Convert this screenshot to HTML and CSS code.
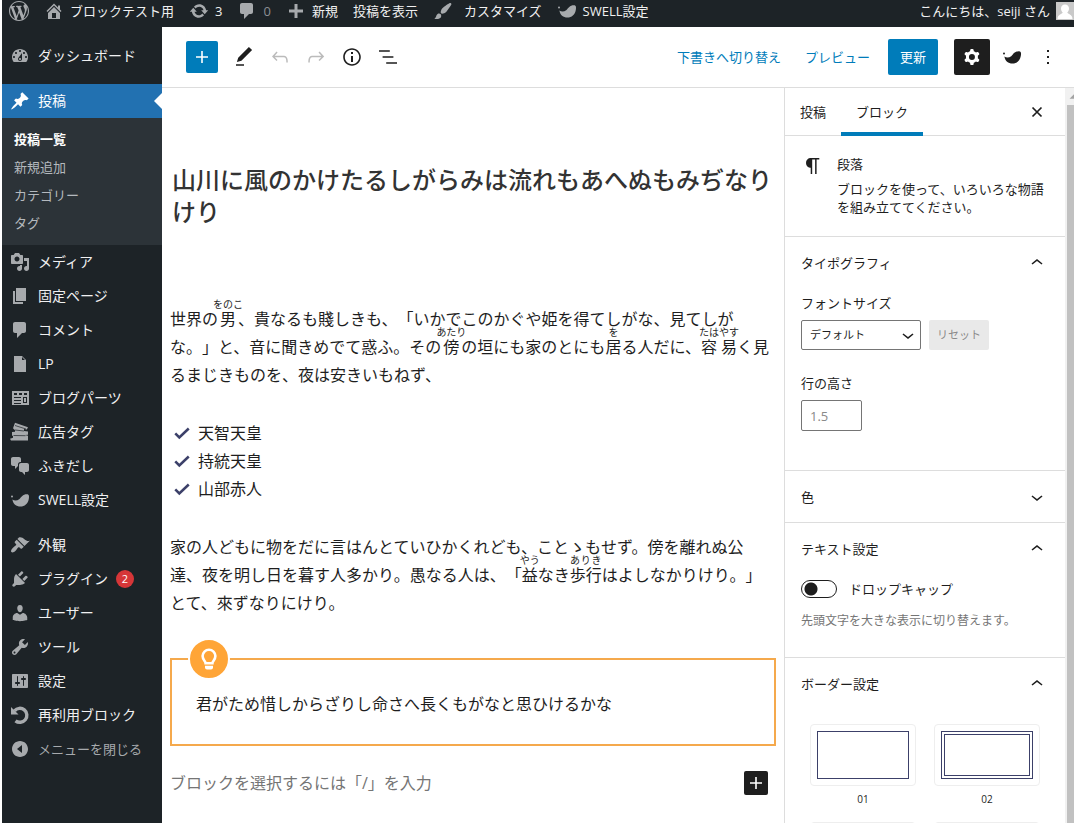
FILE: index.html
```html
<!DOCTYPE html>
<html lang="ja">
<head>
<meta charset="utf-8">
<title>投稿の編集</title>
<link rel="stylesheet" href="styles.css">
</head>
<body>
<svg class="sprite" aria-hidden="true">
  <symbol id="swell" viewBox="0 0 20 20"><circle cx="2" cy="6.500" r="1"/><path d="M2.400 9.600C4.500 11 7 11 9.200 9.200 11.500 7 12.500 4.200 17 4.200 19.200 4.200 19.300 6.500 18.800 9 18 13.800 14.500 16.600 10.500 16.600 6.200 16.600 3 14 2.400 9.600z"/></symbol>
  <symbol id="comment" viewBox="0 0 20 20"><path d="M5 2h9c1.1 0 2 .9 2 2v7c0 1.100-.9 2-2 2h-2l-5 5v-5H5c-1.100 0-2-.9-2-2V4c0-1.100.9-2 2-2z"/></symbol>
  <symbol id="add" viewBox="0 0 24 24"><path d="M18 11.200h-5.200V6h-1.600v5.200H6v1.600h5.200V18h1.600v-5.200H18z"/></symbol>
  <symbol id="up" viewBox="0 0 24 24"><path d="M6.500 12.400L12 8l5.500 4.400-.9 1.200L12 10l-4.500 3.600-1-1.200z"/></symbol>
  <symbol id="down" viewBox="0 0 24 24"><path d="M17.500 11.600L12 16l-5.500-4.400.9-1.200L12 14l4.500-3.600 1 1.200z"/></symbol>
  <symbol id="check" viewBox="0 0 20 20"><path d="M2.500 10.500l4.500 4.500L17.500 5" fill="none" stroke="currentColor" stroke-width="2.800"/></symbol>
</svg>

<header class="adminbar">
  <a href="#" aria-label="WordPress について"><svg class="dash" viewBox="0 0 20 20"><path d="M20 10c0-5.510-4.490-10-10-10C4.480 0 0 4.490 0 10c0 5.520 4.480 10 10 10 5.510 0 10-4.480 10-10zM7.780 15.370L4.370 6.220c.55-.02 1.170-.08 1.170-.08.5-.06.44-1.130-.06-1.110 0 0-1.450.11-2.370.11-.18 0-.37 0-.58-.01C4.120 2.690 6.870 1.110 10 1.110c2.330 0 4.450.87 6.050 2.340-.68-.11-1.650.39-1.650 1.580 0 .74.45 1.360.9 2.100.35.61.55 1.360.55 2.460 0 1.490-1.400 5-1.400 5l-3.030-8.370c.54-.02.82-.17.82-.17.5-.05.44-1.250-.06-1.220 0 0-1.440.12-2.380.12-.87 0-2.330-.12-2.330-.12-.5-.03-.56 1.200-.06 1.220l.92.08 1.260 3.410zM17.410 10c.24-.64.74-1.870.43-4.250.7 1.290 1.050 2.710 1.050 4.250 0 3.290-1.730 6.240-4.400 7.780.97-2.590 1.940-5.200 2.920-7.780zM6.100 18.090C3.120 16.650 1.110 13.530 1.110 10c0-1.300.23-2.480.72-3.590C3.250 10.300 4.670 14.200 6.100 18.090zm4.030-6.630l2.580 6.980c-.86.29-1.760.45-2.710.45-.79 0-1.570-.11-2.290-.33.81-2.380 1.620-4.740 2.420-7.100z"/></svg></a>
  <a href="#"><svg class="dash" viewBox="0 0 20 20"><path d="M16 8.500l1.530 1.530-1.060 1.060L10 4.600l-6.470 6.490-1.060-1.060L10 2.500l4 4v-2h2v4zm-6-2.460l6 5.990V18H4v-5.970zM12 17v-5H8v5h4z"/></svg>ブロックテスト用</a>
  <a href="#"><svg class="dash" viewBox="0 0 20 20"><path d="M10.200 3.280c3.530 0 6.430 2.610 6.920 6h2.080l-3.500 4-3.500-4h2.320c-.45-1.970-2.210-3.450-4.320-3.450-1.450 0-2.730.71-3.540 1.780L4.950 5.660C6.230 4.200 8.110 3.280 10.200 3.280zm-.4 13.440c-3.520 0-6.430-2.610-6.920-6H.8l3.500-4c1.170 1.330 2.330 2.670 3.500 4H5.480c.45 1.970 2.210 3.450 4.320 3.450 1.450 0 2.730-.71 3.540-1.780l1.710 1.950c-1.280 1.460-3.150 2.380-5.250 2.380z"/></svg>3</a>
  <a href="#" class="muted"><svg class="dash"><use href="#comment"/></svg>0</a>
  <a href="#"><svg class="dash" viewBox="0 0 20 20"><path d="M17 8.500v3h-5.500V17h-3v-5.500H3v-3h5.500V3h3v5.500z"/></svg>新規</a>
  <a href="#">投稿を表示</a>
  <a href="#" class="wide"><svg class="dash" viewBox="0 0 20 20"><path d="M18.330 3.570s.27-.8-.31-1.360c-.53-.52-1.220-.24-1.220-.24-.61.3-5.760 3.470-7.670 5.570-.86.96-2.060 3.790-1.090 4.820.92.98 3.960-.17 4.790-1 2.060-2.060 5.210-7.170 5.500-7.790zM1.400 17.650c2.370-1.560 1.460-3.410 3.230-4.640.93-.65 2.220-.62 3.080.29.63.67.8 2.570-.16 3.460-1.570 1.450-4 1.550-6.150.89z"/></svg>カスタマイズ</a>
  <a href="#"><svg class="dash"><use href="#swell"/></svg>SWELL設定</a>
  <a href="#" class="account">こんにちは、seiji さん<svg class="avatar" viewBox="0 0 18 18"><path fill="#c9c9c9" d="M0 0h18v18H0z"/><path fill="#fff" d="M9 2.500c2.600 0 4 1.800 4 4 0 1.700-.7 3-1.700 4 .3 1.500 5 1.500 5.200 6.500h-15c.2-5 4.900-5 5.200-6.500-1-1-1.700-2.300-1.700-4 0-2.200 1.400-4 4-4z"/></svg></a>
</header>

<div class="shell">
  <nav class="menu" aria-label="メインメニュー">
    <a href="#"><svg class="dash" viewBox="0 0 20 20"><path d="M3.760 16h12.480c1.100-1.370 1.760-3.110 1.760-5 0-4.420-3.580-8-8-8s-8 3.580-8 8c0 1.890.66 3.630 1.760 5zM10 4c.55 0 1 .45 1 1s-.45 1-1 1-1-.45-1-1 .45-1 1-1zM6 6c.55 0 1 .45 1 1s-.45 1-1 1-1-.45-1-1 .45-1 1-1zm8 0c.55 0 1 .45 1 1s-.45 1-1 1-1-.45-1-1 .45-1 1-1zm-5.370 5.550L12 7v6c0 1.100-.9 2-2 2s-2-.9-2-2c0-.57.24-1.080.63-1.450zM4 10c.55 0 1 .45 1 1s-.45 1-1 1-1-.45-1-1 .45-1 1-1zm12 0c.55 0 1 .45 1 1s-.45 1-1 1-1-.45-1-1 .45-1 1-1zm-5 3c0-.55-.45-1-1-1s-1 .45-1 1 .45 1 1 1 1-.45 1-1z"/></svg>ダッシュボード</a>
    <a href="#" class="current gap"><svg class="dash" viewBox="0 0 20 20"><path d="M10.440 3.020l1.820-1.820 6.360 6.350-1.830 1.820c-1.050-.68-2.480-.57-3.410.36l-.75.75c-.92.93-1.040 2.350-.35 3.410l-1.830 1.820-2.410-2.410-2.800 2.790c-.42.42-3.380 2.710-3.800 2.290s1.860-3.390 2.280-3.810l2.790-2.790L4.100 9.360l1.830-1.820c1.050.69 2.480.57 3.400-.36l.75-.75c.93-.92 1.050-2.350.36-3.410z"/></svg>投稿</a>
    <div class="submenu">
      <a href="#" class="here">投稿一覧</a>
      <a href="#">新規追加</a>
      <a href="#">カテゴリー</a>
      <a href="#">タグ</a>
    </div>
    <a href="#"><svg class="dash" viewBox="0 0 20 20"><path d="M13 11V4c0-.55-.45-1-1-1h-1.670L9 1H5L3.670 3H2c-.55 0-1 .45-1 1v7c0 .55.45 1 1 1h10c.55 0 1-.45 1-1zM7 4.500c1.380 0 2.500 1.120 2.500 2.500S8.380 9.500 7 9.500 4.500 8.380 4.500 7 5.620 4.500 7 4.500zM14 6h5v10.500c0 1.380-1.120 2.500-2.500 2.500S14 17.880 14 16.500s1.120-2.500 2.500-2.500c.17 0 .34.02.5.05V9h-3V6zm-4 8.050V13h2v3.500c0 1.380-1.120 2.500-2.500 2.500S7 17.880 7 16.500 8.120 14 9.500 14c.17 0 .34.02.5.05z"/></svg>メディア</a>
    <a href="#"><svg class="dash" viewBox="0 0 20 20"><path d="M6 15V2h10v13H6zm-1 1h8v2H3V5h2v11z"/></svg>固定ページ</a>
    <a href="#"><svg class="dash"><use href="#comment"/></svg>コメント</a>
    <a href="#"><svg class="dash" viewBox="0 0 20 20"><path d="M12 2l4 4v12H4V2h8zm0 4h3l-3-3v3z"/></svg>LP</a>
    <a href="#"><svg class="dash" viewBox="0 0 20 20"><path fill-rule="evenodd" d="M2 3h17v14H2zM4 5v2h3V5zm5 0v2h3V5zm5 0v2h3V5zM4 9v1h7V9zm0 3v1h7v-1zm0 3v1h7v-1zm9-6v6h4V9zm1 1h2v4h-2z"/></svg>ブログパーツ</a>
    <a href="#"><svg class="dash" viewBox="0 0 20 20"><path d="M5 .8l13 4.500-1.200 2.200L14 7v2l4 .5v3.200l-3 .3 3 .8V18.500H1l-1-1.800 3-1V14l-1-.5V10l3-.2V8.200L3 6.200z"/><path d="M5 8l9 1M3.500 13.500l12 .2M5 3.500l11 3.500" fill="none" stroke="#1d2327" stroke-width=".7"/></svg>広告タグ</a>
    <a href="#"><svg class="dash" viewBox="0 0 20 20"><path d="M11 6h-.82C9.070 6 8 7.200 8 8.160V10l-3 3v-3H3c-1.100 0-2-.9-2-2V3c0-1.100.9-2 2-2h6c1.100 0 2 .9 2 2v3zm0 1h6c1.100 0 2 .9 2 2v5c0 1.100-.9 2-2 2h-2v3l-3-3h-1c-1.100 0-2-.9-2-2V9c0-1.100.9-2 2-2z"/></svg>ふきだし</a>
    <a href="#"><svg class="dash"><use href="#swell"/></svg>SWELL設定</a>
    <a href="#" class="gap"><svg class="dash" viewBox="0 0 20 20"><path d="M14.480 11.060L7.410 3.990l1.500-1.500c.5-.56 2.300-.47 3.510.32 1.210.8 1.430 1.280 2.910 2.100 1.180.64 2.450 1.260 4.450.85zm-.71.71L6.700 4.700 4.930 6.470c-.39.39-.39 1.020 0 1.410l1.060 1.060c.39.39.39 1.030 0 1.420-.6.6-1.430 1.110-2.210 1.690-.35.26-.7.53-1.010.84C1.430 14.230.4 16.080 1.400 17.070c.99 1 2.840-.03 4.180-1.360.31-.31.58-.66.85-1.020.57-.78 1.080-1.610 1.690-2.210.39-.39 1.020-.39 1.410 0l1.060 1.060c.39.39 1.020.39 1.410 0z"/></svg>外観</a>
    <a href="#"><svg class="dash" viewBox="0 0 20 20"><path d="M13.110 4.360L9.870 7.600 8 5.730l3.240-3.240c.35-.34 1.050-.2 1.560.32.52.51.66 1.210.31 1.550zm-8 1.770l.91-1.120 9.010 9.010-1.190.84c-.71.71-2.630 1.160-3.820 1.160H6.140L4.900 17.260c-.59.59-1.540.59-2.120 0-.59-.58-.59-1.530 0-2.120l1.240-1.240v-3.880c0-1.130.4-3.190 1.090-3.890zm7.260 3.970l3.240-3.240c.34-.35 1.040-.21 1.550.31.52.51.66 1.210.31 1.550l-3.240 3.250z"/></svg>プラグイン<span class="count">2</span></a>
    <a href="#"><svg class="dash" viewBox="0 0 20 20"><path d="M10 9.250c-2.270 0-2.730-3.440-2.730-3.440C7 4.020 7.820 2 9.970 2c2.160 0 2.980 2.020 2.710 3.810 0 0-.41 3.440-2.680 3.440zm0 2.570L12.720 10c2.390 0 4.520 2.330 4.520 4.530v2.490s-3.650 1.130-7.240 1.130c-3.650 0-7.240-1.130-7.240-1.130v-2.490c0-2.250 1.940-4.480 4.470-4.480z"/></svg>ユーザー</a>
    <a href="#"><svg class="dash" viewBox="0 0 20 20"><path d="M16.680 9.770c-1.340 1.340-3.300 1.670-4.950.99l-5.410 6.520c-.99.99-2.590.99-3.580 0s-.99-2.590 0-3.570l6.520-5.420c-.68-1.650-.35-3.610.99-4.950 1.280-1.280 3.120-1.620 4.720-1.060l-2.890 2.890 2.820 2.820 2.860-2.870c.53 1.580.18 3.390-1.080 4.650zM3.810 16.210c.4.39 1.040.39 1.430 0 .4-.4.4-1.040 0-1.430-.39-.4-1.030-.4-1.430 0-.39.39-.39 1.030 0 1.430z"/></svg>ツール</a>
    <a href="#"><svg class="dash" viewBox="0 0 20 20"><path d="M18 16V4c0-.55-.45-1-1-1H3c-.55 0-1 .45-1 1v12c0 .55.45 1 1 1h14c.55 0 1-.45 1-1zM8 11h1c.55 0 1 .45 1 1s-.45 1-1 1H8v1.500c0 .28-.22.5-.5.5s-.5-.22-.5-.5V13H6c-.55 0-1-.45-1-1s.45-1 1-1h1V5.500c0-.28.22-.5.5-.5s.5.22.5.5V11zm5-2h-1c-.55 0-1-.45-1-1s.45-1 1-1h1V5.500c0-.28.22-.5.5-.5s.5.22.5.5V7h1c.55 0 1 .45 1 1s-.45 1-1 1h-1v5.500c0 .28-.22.5-.5.5s-.5-.22-.5-.5V9z"/></svg>設定</a>
    <a href="#"><svg class="dash" viewBox="0 0 20 20"><path d="M4.500 5.800A7 7 0 1 1 5.500 15.800" fill="none" stroke="currentColor" stroke-width="3.400"/><path d="M1 2v7.500h7.500z"/></svg>再利用ブロック</a>
    <button type="button" class="collapse"><svg class="dash" viewBox="0 0 20 20"><path fill-rule="evenodd" d="M10 2c4.420 0 8 3.580 8 8s-3.580 8-8 8-8-3.580-8-8 3.580-8 8-8zm2 12V6l-5 4z"/></svg>メニューを閉じる</button>
  </nav>

  <div class="editor">
    <div class="toolbar">
      <button type="button" class="inserter" aria-label="ブロックを追加"><svg class="icon"><use href="#add"/></svg></button>
      <div class="tools">
        <button type="button" class="tool" aria-label="ツール"><svg class="icon" viewBox="0 0 24 24"><path d="M20.100 5.100L16.900 2 6.200 12.700l-1.300 4.400 4.500-1.300L20.100 5.100zM4 20.800h8v-1.500H4v1.500z"/></svg></button>
        <button type="button" class="tool" aria-label="元に戻す" disabled><svg class="icon" viewBox="0 0 24 24"><path d="M18.300 11.700c-.6-.6-1.400-.9-2.300-.9H6.700l2.900-3.300-1.100-1-4.500 5L8.500 16l1-1-2.700-2.700H16c.5 0 .9.2 1.300.5 1 1 1 3.400 1 4.500v.3h1.500v-.2c0-1.500 0-4.300-1.500-5.700z"/></svg></button>
        <button type="button" class="tool" aria-label="やり直す" disabled><svg class="icon" viewBox="0 0 24 24"><path d="M15.600 6.500l-1.100 1 2.900 3.300H8c-.9 0-1.700.3-2.300.9-1.400 1.500-1.400 4.200-1.400 5.600v.2h1.500v-.3c0-1.100 0-3.500 1-4.500.3-.3.7-.5 1.300-.5h9.200L14.500 15l1.100 1.100 4.600-4.600-4.600-5z"/></svg></button>
        <button type="button" class="tool" aria-label="詳細"><svg class="icon" viewBox="0 0 24 24"><path d="M12 3.200c-4.800 0-8.800 3.900-8.800 8.800 0 4.800 3.900 8.800 8.800 8.800 4.800 0 8.800-3.900 8.800-8.800 0-4.800-4-8.800-8.800-8.800zm0 16c-4 0-7.200-3.300-7.200-7.200C4.800 8 8 4.800 12 4.800s7.200 3.300 7.200 7.200c0 4-3.200 7.200-7.200 7.200zM11 17h2v-6h-2v6zm0-8h2V7h-2v2z"/></svg></button>
        <button type="button" class="tool" aria-label="リスト表示"><svg class="icon" viewBox="0 0 24 24"><path d="M13.800 5.200H3v1.500h10.800V5.200zm-3.600 12v1.500H21v-1.500H10.200zm7.200-6H6.600v1.500h10.800v-1.500z"/></svg></button>
      </div>
      <div class="actions">
        <button type="button" class="text">下書きへ切り替え</button>
        <button type="button" class="text">プレビュー</button>
        <button type="button" class="primary">更新</button>
        <div class="tools">
          <button type="button" class="tool active" aria-label="設定"><svg class="icon" viewBox="0 0 24 24"><path fill-rule="evenodd" d="M10.289 4.836A1 1 0 0111.275 4h1.306a1 1 0 01.987.836l.244 1.466c.787.26 1.503.679 2.108 1.218l1.393-.522a1 1 0 011.216.437l.653 1.130a1 1 0 01-.23 1.273l-1.148.944a6.025 6.025 0 010 2.435l1.149.946a1 1 0 01.23 1.272l-.653 1.130a1 1 0 01-1.216.437l-1.394-.522c-.605.54-1.320.958-2.108 1.218l-.244 1.466a1 1 0 01-.987.836h-1.306a1 1 0 01-.986-.836l-.244-1.466a5.995 5.995 0 01-2.108-1.218l-1.394.522a1 1 0 01-1.217-.436l-.653-1.131a1 1 0 01.23-1.272l1.149-.946a6.026 6.026 0 010-2.435l-1.148-.944a1 1 0 01-.23-1.272l.653-1.131a1 1 0 011.217-.437l1.393.522a5.994 5.994 0 012.108-1.218l.244-1.466zM14.929 12a3 3 0 11-6 0 3 3 0 016 0z"/></svg></button>
          <button type="button" class="tool" aria-label="SWELL設定"><svg class="dash"><use href="#swell"/></svg></button>
          <button type="button" class="tool" aria-label="オプション"><svg class="icon" viewBox="0 0 24 24"><path d="M11 5h2v2h-2zm0 6h2v2h-2zm0 6h2v2h-2z"/></svg></button>
        </div>
      </div>
    </div>

    <div class="workspace">
      <main class="canvas">
        <h1 class="title">山川に風のかけたるしがらみは流れもあへぬもみぢなりけり</h1>
        <p class="para">世界の<ruby>男<rt>をのこ</rt></ruby>、貴なるも賤しきも、「いかでこのかぐや姫を得てしがな、見てしがな。」と、音に聞きめでて惑ふ。その<ruby>傍<rt>あたり</rt></ruby>の垣にも家のとにも<ruby>居<rt>を</rt></ruby>る人だに、<ruby>容易<rt>たはやす</rt></ruby>く見るまじきものを、夜は安きいもねず、</p>
        <ul class="checks">
          <li><svg class="tick"><use href="#check"/></svg>天智天皇</li>
          <li><svg class="tick"><use href="#check"/></svg>持統天皇</li>
          <li><svg class="tick"><use href="#check"/></svg>山部赤人</li>
        </ul>
        <p class="para">家の人どもに物をだに言はんとていひかくれども、ことゝもせず。傍を離れぬ公達、夜を明し日を暮す人多かり。愚なる人は、「<ruby>益<rt>やう</rt></ruby>なき<ruby>歩行<rt>ありき</rt></ruby>はよしなかりけり。」とて、來ずなりにけり。</p>
        <div class="hint">
          <span class="bulb"><svg viewBox="0 0 38 38"><path d="M15.600 23.200c0-2.200-3-3.300-3-7.100a6.400 6.400 0 0 1 12.800 0c0 3.800-3 4.900-3 7.100z" fill="none" stroke="#fff" stroke-width="2.600"/><path fill="#fff" d="M15 25.800h8v1.600a2 2 0 0 1-2 2h-4a2 2 0 0 1-2-2z"/></svg></span>
          <p>君がため惜しからざりし命さへ長くもがなと思ひけるかな</p>
        </div>
        <div class="appender">
          <input type="text" aria-label="ブロックを追加" placeholder="ブロックを選択するには「/」を入力">
          <button type="button" aria-label="ブロックを追加"><svg class="icon"><use href="#add"/></svg></button>
        </div>
      </main>

      <aside class="panel">
        <div class="tabs">
          <button type="button">投稿</button>
          <button type="button" class="on">ブロック</button>
          <button type="button" class="close" aria-label="設定を閉じる"><svg class="icon" viewBox="0 0 24 24"><path d="M7.500 7.500l9 9m0-9l-9 9" fill="none" stroke="currentColor" stroke-width="1.700"/></svg></button>
        </div>
        <div class="card">
          <svg class="icon" viewBox="0 0 24 24"><path d="M18.300 4H9.900v-.1l-.9.2c-2.300.4-4 2.400-4 4.800s1.700 4.400 4 4.800l.7.1V20h1.500V5.500h2.900V20h1.500V5.500h2.700V4z"/></svg>
          <div>
            <h2>段落</h2>
            <p>ブロックを使って、いろいろな物語を組み立ててください。</p>
          </div>
        </div>
        <section class="tall">
          <button type="button" class="head">タイポグラフィ<svg class="icon"><use href="#up"/></svg></button>
          <label class="label" for="size">フォントサイズ</label>
          <div class="row">
            <div class="select"><select id="size"><option>デフォルト</option></select><svg class="icon"><use href="#down"/></svg></div>
            <button type="button" class="reset" disabled>リセット</button>
          </div>
          <label class="label second" for="leading">行の高さ</label>
          <input class="number" id="leading" type="text" placeholder="1.5">
        </section>
        <section>
          <button type="button" class="head">色<svg class="icon"><use href="#down"/></svg></button>
        </section>
        <section class="text-settings">
          <button type="button" class="head">テキスト設定<svg class="icon"><use href="#up"/></svg></button>
          <div class="switch"><input type="checkbox" id="dropcap"><label for="dropcap">ドロップキャップ</label></div>
          <p class="help">先頭文字を大きな表示に切り替えます。</p>
        </section>
        <section>
          <button type="button" class="head">ボーダー設定<svg class="icon"><use href="#up"/></svg></button>
          <div class="borders">
            <button type="button"><span class="sample"><span></span></span>01</button>
            <button type="button"><span class="sample double"><span></span></span>02</button>
            <button type="button" aria-label="ボーダー"><span class="sample"><span></span></span></button>
            <button type="button" aria-label="ボーダー"><span class="sample"><span></span></span></button>
          </div>
        </section>
      </aside>
      <div class="scroll" aria-hidden="true"><svg viewBox="0 0 9 17"><path d="M9 6v5H4z"/></svg><span></span></div>
    </div>
  </div>
</div>
</body>
</html>
```
FILE: styles.css
```css
* { box-sizing: border-box; }
html, body { height: 100%; }
body {
  display: flex;
  flex-direction: column;
  margin: 0;
  padding-left: 2px;
  overflow: hidden;
  background: #fff;
  color: #1e1e1e;
  font: 13px/18px "Open Sans", "Noto Sans CJK JP", sans-serif;
  text-spacing-trim: space-all;
}
h1, h2, p, ul { margin: 0; padding: 0; font-weight: 400; }
a { color: inherit; text-decoration: none; }
button, input, select { margin: 0; font: inherit; color: inherit; }
button { display: flex; align-items: center; padding: 0; border: 0; background: none; }
svg { flex: none; fill: currentColor; }
.sprite { display: none; }
.dash { width: 20px; height: 20px; }
.icon { width: 24px; height: 24px; }

.adminbar {
  display: flex;
  flex: none;
  gap: 15px;
  height: 27px;
  padding: 0 0 5px 7px;
  background: #1d2327;
  color: #f0f0f1;
  white-space: nowrap;
}
.adminbar a { display: flex; align-items: center; gap: 6px; }
.adminbar .wide { gap: 11px; }
.adminbar .dash { color: #a7aaad; }
.adminbar .muted { color: #8c8f94; }
.adminbar .account { margin-left: auto; }
.avatar { width: 18px; height: 18px; }

.shell { display: flex; flex: 1; min-height: 0; }
.menu {
  flex: none;
  width: 160px;
  padding-top: 12px;
  background: #1d2327;
  color: #f0f0f1;
  font-size: 14px;
}
.menu > a, .collapse { display: flex; align-items: center; gap: 8px; height: 34px; padding-left: 8px; }
.menu .dash { color: #a7aaad; }
.menu .gap { margin-top: 11px; }
.menu .current { position: relative; background: #2271b1; color: #fff; }
.menu .current .dash { color: #fff; }
.menu .current::after {
  content: "";
  position: absolute;
  right: 0;
  top: 9px;
  border: 8px solid transparent;
  border-left: 0;
  border-right-color: #fff;
}
.menu .collapse { color: #a7aaad; font-size: 13px; }
.submenu { padding: 7px 0 8px; background: #2c3338; color: #b4b9be; font-size: 13px; }
.submenu a { display: block; padding: 5px 12px; }
.submenu .here { color: #fff; font-weight: 700; }
.count {
  width: 18px;
  border-radius: 9px;
  background: #d63638;
  color: #fff;
  font-size: 11px;
  text-align: center;
}

.editor { display: flex; flex: 1; flex-direction: column; min-width: 0; }
.toolbar {
  display: flex;
  flex: none;
  align-items: center;
  height: 61px;
  padding: 0 8px 0 24px;
  border-bottom: 1px solid #ddd;
}
.inserter { justify-content: center; width: 32px; height: 32px; margin-right: 8px; border-radius: 2px; background: #007cba; color: #fff; }
.tools { display: flex; }
.tool { justify-content: center; width: 36px; height: 36px; }
.tool:disabled { color: #bbb; }
.tool.active { margin-right: 4px; border-radius: 2px; background: #1e1e1e; color: #fff; }
.actions { display: flex; align-items: center; margin-left: auto; white-space: nowrap; }
.text { margin-right: 24px; color: #007cba; }
.text + .text { margin-right: 18px; }
.primary { height: 36px; margin-right: 16px; padding: 0 12px; border-radius: 2px; background: #007cba; color: #fff; }

.workspace { display: flex; flex: 1; min-height: 0; }
.canvas { flex: 1; min-width: 0; padding: 76px 8px 0; overflow: hidden; font-size: 16px; line-height: 28px; }
.title { padding: 0 2px; color: #333; font-size: 24px; font-weight: 500; line-height: 32px; }
.para { margin-top: 30px; padding-right: 4px; }
.title + .para { margin-top: 71px; }
rt { font-size: 10px; line-height: 10px; }
.checks { margin-top: 30px; list-style: none; }
.checks li { display: flex; align-items: center; gap: 7px; padding-left: 3px; }
.tick { width: 18px; height: 18px; color: #3c4069; }
.hint { position: relative; margin-top: 41px; padding: 30px 24px 26px; border: 2px solid #f5a94c; }
.bulb { position: absolute; top: -22px; left: 16px; display: flex; border: 2px solid #fff; border-radius: 50%; background: #ffa537; }
.bulb svg { width: 38px; height: 38px; }
.appender { display: flex; align-items: center; margin-top: 23px; padding-right: 8px; }
.appender input { flex: 1; min-width: 0; padding: 0; border: 0; outline: 0; background: none; }
.appender input::placeholder { color: #757575; }
.appender button { border-radius: 2px; background: #1e1e1e; color: #fff; }

.panel { flex: none; width: 281px; border-left: 1px solid #ddd; overflow: hidden; }
.tabs { display: flex; height: 48px; border-bottom: 1px solid #ddd; }
.tabs button { height: 48px; padding: 0 15px; }
.tabs .on { border-bottom: 4px solid #007cba; padding-top: 4px; }
.tabs .close { margin-left: auto; padding: 0 16px; }
.card { display: flex; gap: 12px; padding: 16px; padding-bottom: 20px; }
.card .icon { margin-top: 2px; }
.card > svg + div { padding-top: 3px; }
.card h2 { margin-bottom: 7px; font-size: 13px; }
.panel section { border-top: 1px solid #ddd; padding: 0 16px; }
.head { justify-content: space-between; width: 100%; height: 51px; }
.label { display: block; margin: 6px 0 8px; }
.label.second { margin-top: 24px; }
.panel .tall { padding-bottom: 39px; }
.row { display: flex; gap: 8px; }
.select { position: relative; width: 120px; }
.select select {
  width: 100%;
  height: 30px;
  padding: 0 8px;
  border: 1px solid #757575;
  border-radius: 2px;
  appearance: none;
  background: #fff;
  font-size: 11px;
}
.select .icon { position: absolute; top: 3px; right: 1px; pointer-events: none; }
.reset { height: 30px; padding: 0 8px; border-radius: 2px; background: #e9e9e9; color: #8a8a8a; font-size: 11px; }
.number { width: 61px; height: 31px; padding: 0 8px; border: 1px solid #757575; border-radius: 2px; }
.number::placeholder { color: #8a8a8a; }
.switch { display: flex; align-items: center; gap: 12px; margin-top: 6px; }
.switch input {
  width: 36px;
  height: 18px;
  border: 1px solid #1e1e1e;
  border-radius: 9px;
  appearance: none;
  background: radial-gradient(circle at 9px 8px, #1e1e1e 6px, transparent 7px);
}
.help { margin-top: 14px; color: #757575; font-size: 12px; }
.panel .text-settings { padding-bottom: 27px; }
.borders { display: grid; grid-template-columns: 106px 106px; gap: 14px 18px; padding: 15px 9px 0; }
.borders button { flex-direction: column; gap: 4px; font-size: 10px; }
.sample { width: 106px; height: 62px; padding: 6px; border: 1px solid #eee; border-radius: 4px; }
.sample span { display: block; height: 48px; border: 1px solid #3c4069; }
.sample.double span { border-width: 4px; border-style: double; }
.scroll { display: flex; flex: none; flex-direction: column; width: 9px; padding-left: 1px; background: #f1f1f1; }
.scroll svg { width: 8px; height: 17px; color: #a3a3a3; }
.scroll span { flex: 1; margin-left: 1px; background: #c1c1c1; }
```
